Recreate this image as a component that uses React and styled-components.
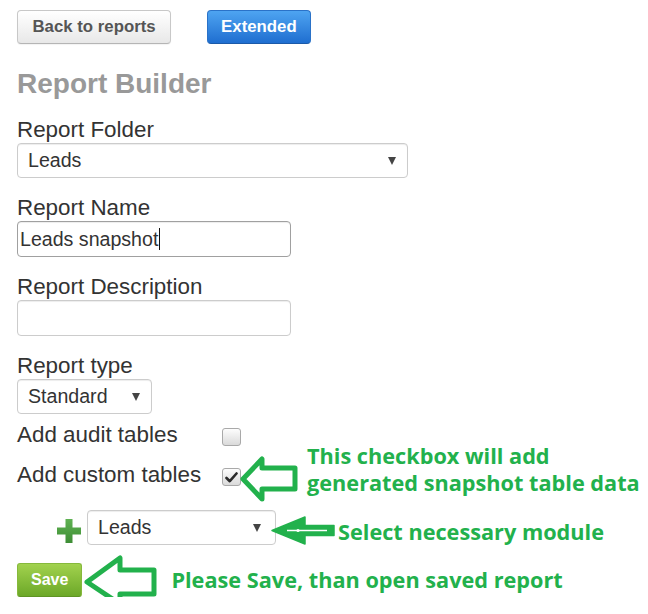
import React from "react";
import styled, { createGlobalStyle, css } from "styled-components";

const GREEN = "#22b14c";

const GlobalStyle = createGlobalStyle`
  html, body { margin: 0; padding: 0; background: #fff; overflow: hidden; }
  body { font-family: "Liberation Sans", Arial, sans-serif; color: #333; }
`;

const Page = styled.div`
  padding: 10px 0 0 17px;
`;

const Toolbar = styled.div`
  display: flex;
  gap: 36px;
  height: 34px;
`;

const variants = {
  default: css`
    color: #555;
    background: linear-gradient(#ffffff, #e8e8e8);
    border-color: #c8c8c8 #c8c8c8 #b5b5b5;
    box-shadow: inset 0 1px 0 rgba(255, 255, 255, 0.2), 0 1px 1px rgba(0, 0, 0, 0.05);
    padding: 0 14.5px;
  `,
  primary: css`
    color: #fff;
    background: linear-gradient(#4ea4f1, #1f6ed0);
    border-color: #2a72c8 #2a72c8 #1b5aa8;
    padding: 0 13px;
  `,
  success: css`
    color: #fff;
    background: linear-gradient(#a2d24e, #6ca828);
    border-color: #86b93c #86b93c #5f9424;
    font-size: 16px;
    border-radius: 3px;
    padding: 0 13px;
  `,
};

const Button = styled.button`
  height: 34px;
  box-sizing: border-box;
  border: 1px solid;
  border-radius: 4px;
  font-family: "Liberation Sans", Arial, sans-serif;
  font-weight: bold;
  font-size: 16.8px;
  line-height: 1;
  cursor: pointer;
  ${({ $variant }) => variants[$variant || "default"]}
`;

const Heading = styled.h2`
  margin: 24px 0 0;
  font-size: 28px;
  line-height: 32px;
  font-weight: bold;
  color: #999;
`;

const FieldGroup = styled.div`
  margin-top: 18px;
`;

const Label = styled.div`
  font-size: 22.4px;
  line-height: 24px;
  color: #333;
`;

const SelectBox = styled.div`
  display: flex;
  align-items: center;
  justify-content: space-between;
  box-sizing: border-box;
  width: ${({ $width }) => $width}px;
  height: 35px;
  margin-top: ${({ $mt }) => ($mt === undefined ? 1 : $mt)}px;
  padding: 0 ${({ $pr }) => $pr || 11}px 0 10px;
  border: 1px solid #ccc;
  border-radius: 4px;
  background: #fff;
  box-shadow: inset 0 1px 1px rgba(0, 0, 0, 0.075);
  font-size: 19.6px;
  color: #333;
  flex: none;
`;

const Caret = styled.span`
  width: 0;
  height: 0;
  border-left: 4.5px solid transparent;
  border-right: 4.5px solid transparent;
  border-top: 8px solid #444;
`;

const TextBox = styled.div`
  display: flex;
  align-items: center;
  box-sizing: border-box;
  width: 274px;
  height: 36px;
  margin-top: 1px;
  padding-left: 2px;
  border: 1px solid ${({ $focused }) => ($focused ? "#a0a0a0" : "#ccc")};
  border-radius: 4px;
  background: #fff;
  box-shadow: inset 0 1px 1px rgba(0, 0, 0, 0.075);
  font-size: 19.6px;
  color: #333;
`;

const TextCursor = styled.span`
  display: inline-block;
  width: 1px;
  height: 22px;
  margin-left: 1px;
  background: #111;
`;

const CheckRow = styled.div`
  display: flex;
  align-items: flex-start;
  height: 24px;
  margin-top: ${({ $mt }) => $mt}px;
`;

const RowLabel = styled.div`
  flex: none;
  width: 205px;
  font-size: 22.4px;
  line-height: 24px;
  color: #333;
`;

const Checkbox = styled.span`
  flex: none;
  display: flex;
  align-items: center;
  justify-content: center;
  box-sizing: border-box;
  width: 19px;
  height: 18px;
  margin-top: 5px;
  border: 1px solid #a9a9a9;
  border-radius: 3px;
  background: linear-gradient(#fdfdfd, #dadada);
`;

const ModuleRow = styled.div`
  display: flex;
  align-items: flex-start;
  height: 35px;
  margin-top: 23px;
  padding-left: 40px;
`;

const SaveRow = styled.div`
  display: flex;
  align-items: flex-start;
  height: 34px;
  margin-top: 18px;
`;

const Plus = styled.svg`
  flex: none;
  margin-top: 9px;
  margin-right: 6px;
`;

const CalloutArrow = styled.svg`
  flex: none;
  margin-left: ${({ $ml }) => $ml}px;
  margin-top: ${({ $mt }) => $mt}px;
  overflow: visible;
`;

const CalloutText = styled.div`
  flex: none;
  margin-left: ${({ $ml }) => $ml}px;
  margin-top: ${({ $mt }) => $mt}px;
  font-family: "Open Sans", "Noto Sans", sans-serif;
  font-weight: 700;
  font-size: 21.7px;
  line-height: 27.4px;
  color: ${GREEN};
  white-space: nowrap;
`;

const CheckMark = () => (
  <svg width="13" height="11" viewBox="0 0 13 11">
    <path d="M1.5 6 L4.8 9.2 L11.5 1.5" fill="none" stroke="#2b2b2b" strokeWidth="2.6" strokeLinejoin="round" strokeLinecap="round" />
  </svg>
);

export default function App() {
  return (
    <>
      <GlobalStyle />
      <Page>
        <Toolbar>
          <Button>Back to reports</Button>
          <Button $variant="primary">Extended</Button>
        </Toolbar>

        <Heading>Report Builder</Heading>

        <FieldGroup>
          <Label>Report Folder</Label>
          <SelectBox $width={391}>
            <span>Leads</span>
            <Caret />
          </SelectBox>
        </FieldGroup>

        <FieldGroup>
          <Label>Report Name</Label>
          <TextBox $focused>
            Leads snapshot
            <TextCursor />
          </TextBox>
        </FieldGroup>

        <FieldGroup>
          <Label>Report Description</Label>
          <TextBox />
        </FieldGroup>

        <FieldGroup>
          <Label>Report type</Label>
          <SelectBox $width={135}>
            <span>Standard</span>
            <Caret />
          </SelectBox>
        </FieldGroup>

        <CheckRow $mt={9}>
          <RowLabel>Add audit tables</RowLabel>
          <Checkbox />
        </CheckRow>

        <CheckRow $mt={16}>
          <RowLabel>Add custom tables</RowLabel>
          <Checkbox>
            <CheckMark />
          </Checkbox>
          <CalloutArrow $ml={-1} $mt={-8} width="58" height="46" viewBox="0 0 58 46">
            <path
              d="M3 24 L22 4 L22 13 L55 13 L55 34 L22 34 L22 44 Z"
              fill="#fff"
              stroke={GREEN}
              strokeWidth="5"
              strokeLinejoin="round"
            />
          </CalloutArrow>
          <CalloutText $ml={9} $mt={-21}>
            This checkbox will add
            <br />
            generated snapshot table data
          </CalloutText>
        </CheckRow>

        <ModuleRow>
          <Plus width="24" height="24" viewBox="0 0 24 24">
            <defs>
              <linearGradient id="plusGrad" x1="0" y1="0" x2="0" y2="1">
                <stop offset="0" stopColor="#5fb252" />
                <stop offset="1" stopColor="#3e8d35" />
              </linearGradient>
            </defs>
            <path d="M8.5 0 H15.5 V8.5 H24 V15.5 H15.5 V24 H8.5 V15.5 H0 V8.5 H8.5 Z" fill="url(#plusGrad)" />
          </Plus>
          <SelectBox $width={189} $mt={0} $pr={14}>
            <span>Leads</span>
            <Caret />
          </SelectBox>
          <CalloutArrow $ml={-6} $mt={5} width="66" height="31" viewBox="0 0 66 31">
            <path d="M2 15.5 L35 2 L35 10.5 L64 10.5 L64 20.5 L35 20.5 L35 29 Z" fill={GREEN} stroke={GREEN} strokeWidth="1.5" strokeLinejoin="round" />
            <path d="M17 15.5 L57 15.5" stroke="#fff" strokeWidth="1.5" />
            <circle cx="28" cy="15.5" r="1.6" fill="#fff" />
          </CalloutArrow>
          <CalloutText $ml={2} $mt={8}>Select necessary module</CalloutText>
        </ModuleRow>

        <SaveRow>
          <Button $variant="success">Save</Button>
          <CalloutArrow $ml={2} $mt={-8} width="75" height="52" viewBox="0 0 75 52">
            <path
              d="M3 27 L36 3 L36 15 L70 15 L70 39 L36 39 L36 49 Z"
              fill="#fff"
              stroke={GREEN}
              strokeWidth="5"
              strokeLinejoin="round"
            />
          </CalloutArrow>
          <CalloutText $ml={12} $mt={3}>Please Save, than open saved report</CalloutText>
        </SaveRow>
      </Page>
    </>
  );
}
